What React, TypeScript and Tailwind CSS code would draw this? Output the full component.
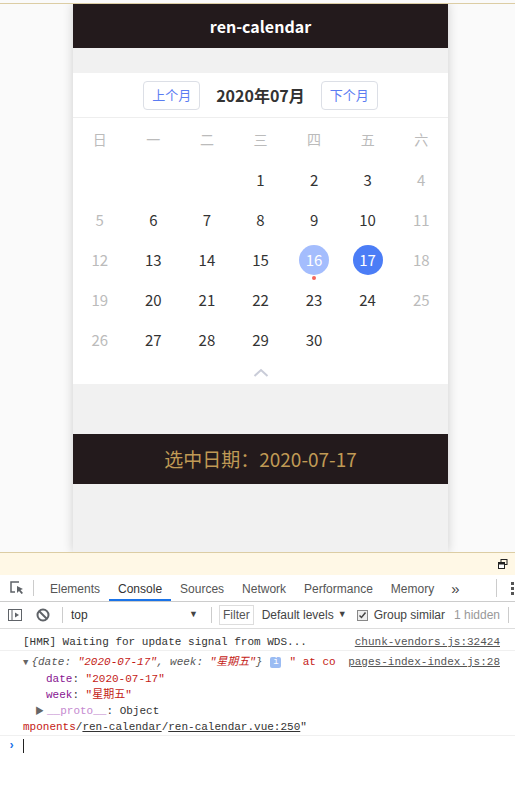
import React from "react";

const weekLabels = ["日", "一", "二", "三", "四", "五", "六"];

// July 2020 starts on Wednesday
const days: (number | null)[] = [
  null, null, null,
  ...Array.from({ length: 30 }, (_, i) => i + 1),
];
while (days.length < 35) days.push(null);

const cjk = { fontFamily: '"Noto Sans CJK SC", "Noto Sans", sans-serif' };
const ui = { fontFamily: '"Liberation Sans", "Noto Sans CJK SC", sans-serif' };
const mono = { fontFamily: '"Liberation Mono", "Noto Sans CJK SC", monospace' };

const DayCell = ({ day, col }: { day: number | null; col: number }) => {
  if (day === null) return <div className="h-10" />;
  const weekend = col === 0 || col === 6;
  if (day === 16 || day === 17) {
    return (
      <div className="h-10 flex items-center justify-center">
        <div
          className={`relative w-[30px] h-[30px] rounded-full flex items-center justify-center text-white ${
            day === 16 ? "bg-[#a4bdfd]" : "bg-[#4b7df6]"
          }`}
        >
          {day}
          {day === 16 && (
            <span className="absolute left-1/2 -translate-x-1/2 top-[31px] w-1 h-1 rounded-full bg-[#f5655b]" />
          )}
        </div>
      </div>
    );
  }
  return (
    <div className={`h-10 flex items-center justify-center ${weekend ? "text-[#bbbbbb]" : "text-[#333333]"}`}>
      {day}
    </div>
  );
};

const Calendar = () => {
  return (
    <div className="bg-white h-[311px] flex flex-col" style={cjk}>
      <div className="h-[45px] flex items-center justify-center gap-4 border-b border-[#eeeeee]">
        <button className="h-[29px] px-[8px] border border-[#dcdfe6] rounded-[4px] text-[13px] text-[#5b7cf2] bg-white">
          上个月
        </button>
        <div className="text-[16px] font-bold text-[#333333]">2020年07月</div>
        <button className="h-[29px] px-[8px] border border-[#dcdfe6] rounded-[4px] text-[13px] text-[#5b7cf2] bg-white">
          下个月
        </button>
      </div>
      <div className="grid grid-cols-7 h-[42px] items-center text-[14px] text-[#bbbbbb]">
        {weekLabels.map((w) => (
          <div key={w} className="text-center">
            {w}
          </div>
        ))}
      </div>
      <div className="grid grid-cols-7 text-[15px]">
        {days.map((d, i) => (
          <DayCell key={i} day={d} col={i % 7} />
        ))}
      </div>
      <div className="flex-1 flex items-center justify-center">
        <svg width="16" height="9" viewBox="0 0 16 9">
          <path d="M1.5 8 L8 2 L14.5 8" fill="none" stroke="#c9ccd8" strokeWidth="2" />
        </svg>
      </div>
    </div>
  );
};

const InspectIcon = () => (
  <svg width="16" height="16" viewBox="0 0 16 16">
    <path d="M10 2H2v10h4" fill="none" stroke="#5f6368" strokeWidth="1.5" />
    <path d="M8 6l6 3-2.5 1 2.5 3-1.5 1-2.5-3-2 2z" fill="#5f6368" />
  </svg>
);

const SidebarIcon = () => (
  <svg width="16" height="16" viewBox="0 0 16 16">
    <rect x="1.5" y="2.5" width="13" height="11" fill="none" stroke="#5f6368" />
    <path d="M5 2.5v11" stroke="#5f6368" />
    <path d="M8 5.5l4 2.5-4 2.5z" fill="#5f6368" />
  </svg>
);

const BlockIcon = () => (
  <svg width="14" height="14" viewBox="0 0 14 14">
    <circle cx="7" cy="7" r="5.5" fill="none" stroke="#5f6368" strokeWidth="2" />
    <path d="M3 3l8 8" stroke="#5f6368" strokeWidth="2" />
  </svg>
);

const Sep = ({ h = "h-[16px]" }: { h?: string }) => <div className={`w-px shrink-0 ${h} bg-[#cccccc]`} />;

const DevTools = () => {
  const tabs = ["Elements", "Console", "Sources", "Network", "Performance", "Memory"];
  return (
    <div className="flex flex-col bg-white" style={ui}>
      <div className="h-[23px] bg-[#fff8e6] border-t border-[#dccda4] flex items-center justify-end pr-[7px]">
        <svg width="10" height="10" viewBox="0 0 10 10">
          <rect x="3" y="0.5" width="6" height="5" fill="none" stroke="#222" />
          <rect x="0.5" y="3.5" width="6" height="6" fill="white" stroke="#222" />
          <rect x="0.5" y="3.5" width="6" height="2" fill="#222" />
        </svg>
      </div>
      <div className="h-[27px] border-b border-[#cccccc] flex items-stretch text-[12px] text-[#333333] whitespace-nowrap">
        <div className="w-[33px] flex items-center justify-center">
          <InspectIcon />
        </div>
        <div className="flex items-center">
          <Sep />
        </div>
        <div className="flex ml-[7px]">
          {tabs.map((t) => (
            <div
              key={t}
              className={`px-[9px] pt-[3px] flex items-center border-b-2 ${
                t === "Console" ? "border-[#1a73e8] text-[#333]" : "border-transparent text-[#555]"
              }`}
            >
              {t}
            </div>
          ))}
        </div>
        <div className="flex items-center pt-[2px] ml-[8px] text-[15px] text-[#444]">»</div>
        <div className="flex-1" />
        <div className="flex items-center gap-[14px]">
          <Sep h="h-[18px]" />
          <div className="flex flex-col gap-[2px] mr-[1px]">
            <span className="w-[3px] h-[3px] bg-[#555]" />
            <span className="w-[3px] h-[3px] bg-[#555]" />
            <span className="w-[3px] h-[3px] bg-[#555]" />
          </div>
        </div>
      </div>
      <div className="h-[27px] border-b border-[#dddddd] flex items-center text-[12px] text-[#333] whitespace-nowrap overflow-hidden">
        <div className="w-[30px] shrink-0 flex justify-center">
          <SidebarIcon />
        </div>
        <div className="w-[26px] shrink-0 flex justify-center">
          <BlockIcon />
        </div>
        <div className="ml-[6px]">
          <Sep />
        </div>
        <div className="w-[130px] shrink-0 ml-[8px] flex items-center justify-between pr-[3px]">
          <span>top</span>
          <span className="text-[9px] text-[#444]">▼</span>
        </div>
        <div className="ml-[10px]">
          <Sep />
        </div>
        <div className="ml-[7px] shrink-0 h-[20px] px-[3px] border border-[#dddddd] flex items-center text-[#555]">Filter</div>
        <div className="ml-[8px] shrink-0 flex items-center gap-[4px] text-[#444]">
          Default levels <span className="text-[9px]">▼</span>
        </div>
        <div className="ml-[10px] shrink-0 w-[11px] h-[11px] border border-[#888] bg-[#eee] flex items-center justify-center">
          <svg width="9" height="9" viewBox="0 0 9 9">
            <path d="M1.5 4.5l2 2 4-5" fill="none" stroke="#444" strokeWidth="1.5" />
          </svg>
        </div>
        <div className="ml-[6px] shrink-0 text-[#444]">Group similar</div>
        <div className="ml-[9px] shrink-0 text-[#999]">1 hidden</div>
        <div className="ml-[8px]">
          <Sep />
        </div>
      </div>
      <div className="text-[11px] leading-[16px]" style={mono}>
        <div className="h-[22px] border-b border-[#f0f0f0] flex items-end pl-[23px] pr-[15px] justify-between text-[#333]">
          <span>[HMR] Waiting for update signal from WDS...</span>
          <span className="underline text-[#545454]">chunk-vendors.js:32424</span>
        </div>
        <div className="border-b border-[#f0f0f0] pt-[3px]">
          <div className="flex justify-between pl-[23px] pr-[15px]">
            <span className="whitespace-nowrap">
              <span className="text-[#666] text-[9px] mr-[3px]">▼</span>
              <span className="italic text-[#555]">
                {"{date: "}
                <span className="text-[#c41a16]">"2020-07-17"</span>
                {", week: "}
                <span className="text-[#c41a16]">"星期五"</span>
                {"}"}
              </span>
              <span className="inline-block align-middle mx-[8px] w-[11px] h-[11px] rounded-[2px] bg-[#9bbcf3] text-white text-[9px] leading-[11px] text-center">
                i
              </span>
              <span className="text-[#c41a16]">" at co</span>
            </span>
            <span className="underline text-[#545454]">pages-index-index.js:28</span>
          </div>
          <div className="pl-[46px] text-[#333]">
            <span className="text-[#881391]">date</span>: <span className="text-[#c41a16]">"2020-07-17"</span>
          </div>
          <div className="pl-[46px] text-[#333]">
            <span className="text-[#881391]">week</span>: <span className="text-[#c41a16]">"星期五"</span>
          </div>
          <div className="pl-[35px] text-[#333]">
            <span className="text-[#666] text-[9px] mr-[3px]">▶</span>
            <span className="text-[#c58ad0]">__proto__</span>: Object
          </div>
          <div className="pl-[23px] text-[#333] leading-[14px] pb-[1px]">
            <span className="text-[#c41a16]">mponents</span>/<span className="underline">ren-calendar</span>/
            <span className="underline">ren-calendar.vue:250</span>"
          </div>
        </div>
        <div className="h-[19px] flex items-center pl-[8px]">
          <span className="text-[#1a73e8] text-[12px] font-bold w-[15px]">›</span>
          <span className="w-px h-[14px] bg-[#222]" />
        </div>
      </div>
    </div>
  );
};

export default function App() {
  return (
    <div className="w-[515px] h-[788px] bg-white overflow-hidden">
      <div className="h-[3px] bg-[#fafafa]" />
      <div className="h-px bg-[#dccda4]" />
      <div className="h-[548px] bg-[#fafafa] overflow-hidden">
        <div className="ml-[73px] w-[375px] h-full bg-[#f1f1f1] shadow-[0_0_10px_rgba(0,0,0,0.18)] flex flex-col">
          <div className="h-[44px] bg-[#231a1c] flex items-center justify-center text-white text-[16px] font-bold" style={cjk}>
            ren-calendar
          </div>
          <div className="h-[25px]" />
          <Calendar />
          <div className="h-[50px]" />
          <div className="h-[50px] bg-[#231a1c] flex items-center justify-center text-[19px] text-[#c09a55]" style={cjk}>
            选中日期：2020-07-17
          </div>
        </div>
      </div>
      <DevTools />
    </div>
  );
}
